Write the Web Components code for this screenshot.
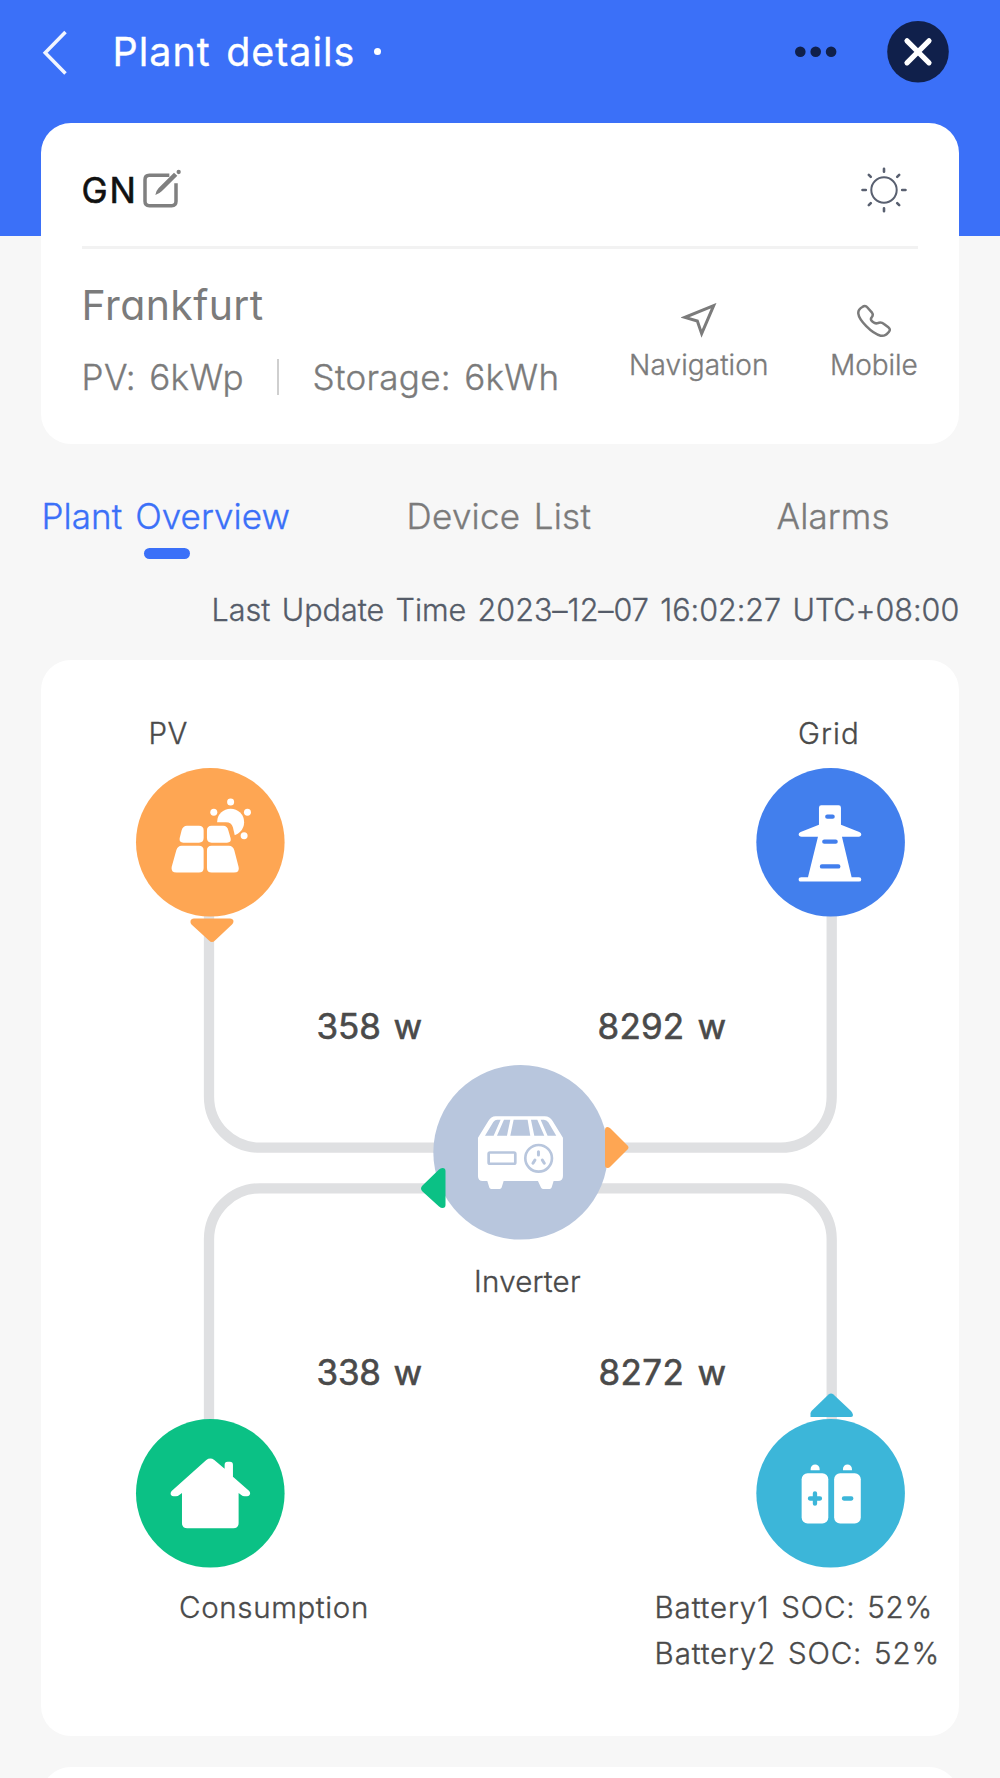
<!DOCTYPE html>
<html lang="en">
<head>
<meta charset="utf-8">
<title>Plant details</title>
<style>
html,body{margin:0;padding:0}
body{width:1000px;height:1778px;overflow:hidden;background:#f7f7f7;font-family:Inter,"Liberation Sans",sans-serif}
</style>
</head>
<body>
<plant-page></plant-page>
<script>
const pen = document.createElement('canvas').getContext('2d');
const define = (name, html, init) => {
  const t = document.createElement('template');
  t.innerHTML = html;
  customElements.define(name, class extends HTMLElement {
    connectedCallback() {
      if (this.shadowRoot) return;
      this.attachShadow({mode: 'open'}).append(t.content.cloneNode(true));
      if (init) init(this, this.shadowRoot);
    }
  });
};

/* One line of text: size = font size, fit = visible width, weight = font weight, edge = extra stroke. */
define('fit-text', `<style>:host{display:block;flex:none;line-height:1.2;white-space:pre}span{display:block}</style><span><slot></slot></span>`, (el, root) => {
  const size = +el.getAttribute('size'), fit = +el.getAttribute('fit'), weight = el.getAttribute('weight') || 400;
  const edge = el.getAttribute('edge') || (weight == 300 ? 0.35 : 0);
  const text = el.textContent, s = root.querySelector('span');
  pen.font = `${weight} ${size}px Inter, "Liberation Sans", sans-serif`;
  const m = pen.measureText(text);
  const gap = size * 0.09, gaps = text.split(' ').length - 1;
  const ink = m.actualBoundingBoxLeft + m.actualBoundingBoxRight + gap * gaps;
  el.style.width = fit + 'px';
  s.style.cssText = `font-size:${size}px;font-weight:${weight};-webkit-text-stroke:${edge}px currentColor;word-spacing:${gap}px;letter-spacing:${((fit - 1.2 - ink) / (text.length - 1)).toFixed(3)}px;margin-left:${m.actualBoundingBoxLeft + 0.6}px`;
});

define('top-bar', `<style>
:host{display:flex;align-items:center;height:103px;padding:0 51px 0 42px;box-sizing:border-box;color:#fff}
.back{margin-top:3px;margin-right:47px}.dot{width:7px;height:7px;border-radius:50%;background:#fff;margin-left:21px}
.more{margin-left:auto;margin-right:50px}
svg{display:block;flex:none}
::slotted(*){margin-top:2px}
</style>
<svg class="back" width="26" height="46" viewBox="0 0 26 46"><path d="M23.5 2 3.2 22.7 23.5 43.5" fill="none" stroke="#fff" stroke-opacity=".93" stroke-width="3.5"/></svg>
<slot></slot><i class="dot"></i>
<svg class="more" width="42" height="12" viewBox="0 0 42 12" fill="#10204b"><circle cx="5.3" cy="5.8" r="5.3"/><circle cx="20.7" cy="5.8" r="5.3"/><circle cx="36.1" cy="5.8" r="5.3"/></svg>
<svg width="62" height="62" viewBox="0 0 62 62"><circle cx="31" cy="30.8" r="30.8" fill="#10204b"/><path d="M20 19.800 42 41.800M42 19.800 20 41.800" stroke="#fff" stroke-width="5.2" stroke-linecap="round"/></svg>`);

define('white-card', `<style>:host{display:block;margin:0 41px;border-radius:30px;background:#fff;position:relative;box-sizing:border-box}</style><slot></slot>`);

define('icon-action', `<style>:host{display:flex;flex-direction:column;align-items:center;gap:10px;color:#7b7b7b}</style><slot name="icon"></slot><slot></slot>`);

define('plant-summary', `<style>
:host{display:block;padding:0 41px;color:#7b7b7b}
.name{display:flex;align-items:center;height:123px;padding:11px 11px 0 1px;box-sizing:border-box;color:#111}
.name svg:first-of-type{margin-left:9px}.sun{margin-left:auto}
hr{border:0;margin:0;height:3px;background:#f2f2f2}
.info{display:flex;justify-content:space-between}
.left{padding:32px 0 0 2px}
.place{font-feature-settings:"cv11"}
.cap{display:flex;align-items:center;margin-top:26px;height:42px}
.bar{width:2px;height:36px;background:#cfcfcf;margin:0 35px 0 34px}
.acts{display:flex;gap:64px;padding-top:54px;margin-right:1px}
svg{display:block;flex:none}
</style>
<div class="name"><fit-text size="35" fit="51" edge="0.6">GN</fit-text>
<svg width="42" height="42" viewBox="431 505 126 126"><path d="M510 524H450q-13 0-13 13v65q0 13 13 13h67q13 0 13-13V548" fill="none" stroke="#808080" stroke-width="10.5"/><path d="M468 583q2-13 10-21l46-46 10 9-46 46q-8 8-20 12Z" fill="#808080"/><circle cx="538" cy="514" r="6.5" fill="#808080"/></svg>
<svg class="sun" width="46" height="46" viewBox="-23 -23 46 46" fill="none" stroke="#596070" stroke-linecap="round"><circle r="12.7" stroke-width="2"/><path stroke-width="2.6" d="M0-21.2V-18.2M0 21.2V18.2M-21.5 0H-18.2M21.5 0H18.2M-15.2-15.2-13.2-13.2M15.2-15.2 13.2-13.2M-15.2 15.2-13.2 13.2M15.2 15.2 13.2 13.2"/></svg></div>
<hr>
<div class="info"><div class="left"><fit-text class="place" size="41" fit="178">Frankfurt</fit-text>
<div class="cap"><fit-text size="35" fit="159" weight="300">PV: 6kWp</fit-text><i class="bar"></i><fit-text size="35" fit="243" weight="300">Storage: 6kWh</fit-text></div></div>
<div class="acts">
<icon-action><svg slot="icon" width="36" height="36" viewBox="244 188 108 108"><path d="M342 196 256 231 293 242 306 280Z" fill="none" stroke="#7b7b7b" stroke-width="9"/></svg><fit-text size="28" fit="137" weight="300">Navigation</fit-text></icon-action>
<icon-action><svg slot="icon" width="36" height="36" viewBox="768 188 108 108"><path d="M787 200c5-4 11-4 14 0l15 17c4 5 2 10-1 14-5 6-1 11 5 15 5 4 9 4 14 2 7-3 12-2 18 3l13 10c5 4 6 8 2 13-7 9-15 14-25 12-28-7-65-47-67-66-1-8 5-16 12-20Z" fill="none" stroke="#7b7b7b" stroke-width="7.5"/></svg><fit-text size="28" fit="85.500" weight="300">Mobile</fit-text></icon-action>
</div></div>`);

define('tab-bar', `<style>
:host{display:flex;justify-content:space-between;margin:51px 111px 0 44px;color:#7b7b7b}
.on{color:#3b70f8}.on i{display:block;width:46px;height:11px;border-radius:5.5px;background:#3b70f8;margin:11px auto 0}
</style><div class="on"><fit-text size="35" fit="246" weight="300">Plant Overview</fit-text><i></i></div>
<fit-text size="35" fit="182" weight="300" style="margin-right:66px">Device List</fit-text><fit-text size="35" fit="113" weight="300">Alarms</fit-text>`);

/* A node, arrow or label pinned on the diagram canvas at its x / y attributes. */
define('flow-pin', `<style>:host{position:absolute;display:block}</style><slot></slot>`, el => {
  el.style.left = el.getAttribute('x') + 'px';
  el.style.top = el.getAttribute('y') + 'px';
});

define('energy-flow', `<style>
:host{display:block;position:relative;height:1076px;color:#4a4a4a}
svg{display:block;overflow:visible}
</style>
<svg width="918" height="1076" viewBox="41 660 918 1076" fill="none" stroke="#dfe0e2" stroke-width="10.3">
<path d="M209 900V1096.7a51 51 0 0 0 51 51H460M831.7 900V1096.7a51 51 0 0 1-51 51H580M209 1430V1239.3a51 51 0 0 1 51-51H460M831.7 1430V1239.3a51 51 0 0 0-51-51H580"/></svg>

<flow-pin x="95" y="108"><svg width="148.6" height="148.6" viewBox="78 204 446 446"><circle cx="301" cy="427" r="223" fill="#fea653"/><g fill="#fff"><circle cx="362" cy="306" r="10.5"/><circle cx="311.500" cy="336.500" r="10.500"/><circle cx="412.500" cy="336.500" r="10.500"/><circle cx="402.500" cy="407" r="10.500"/><circle cx="362" cy="366.500" r="40.500"/></g><path d="M310 366.500H348q17 0 21 16l7 30-40 8-30-30Z" fill="#fea653"/><g fill="#fff"><path d="M231 377h36q14 0 14 14v23q0 14-14 14H220q-13 0-11-13l6-24q4-14 16-14ZM305 377h35q12 0 15 14l7 24q3 13-11 13H305q-14 0-14-14v-23q0-14 14-14ZM215 437h52q14 0 14 14v53q0 14-14 14H200q-18 0-15-17l14-50q4-14 16-14ZM305 437h52q12 0 16 14l13 50q4 17-14 17H305q-14 0-14-14v-53q0-14 14-14Z"/></g></svg></flow-pin>

<flow-pin x="715" y="108"><svg width="148.6" height="148.6" viewBox="528 204 446 446"><circle cx="752" cy="427" r="223" fill="#427fed"/><path fill="#fff" d="M724 316h52q7 0 7 7v51l55 22q6 3 6 7 0 7-8 7H786l29 122h22q7 0 7 6.500t-7 6.500H664q-8 0-8-6.500t8-6.500h20L714 410H665q-9 0-9-7 0-4 6-7l55-22V323q0-7 7-7Z"/><path d="M742 350H758M733 425H767M726 499.500H775" stroke="#427fed" stroke-width="13" stroke-linecap="round"/></svg></flow-pin>

<flow-pin x="95" y="759.4"><svg width="148.6" height="148.6" viewBox="78 208 446 446"><circle cx="301" cy="431" r="223" fill="#0bc185"/><path fill="#fff" d="M289 331q12-9 24 0l31 26V345q0-9 9-9h7q9 0 9 9v36l48 42q6 7 2 13-3 4-8 4H404q-6 0-10-4l-8-6v90q0 16-16 16H232q-16 0-16-16V430l-8 6q-4 4-10 4h-7q-5 0-8-4-3-6 2-12Z"/></svg></flow-pin>

<flow-pin x="715" y="759.4"><svg width="148.600" height="148.600" viewBox="378 208 446 446"><circle cx="602" cy="431" r="223" fill="#3cb6d9"/><g fill="#fff"><rect x="515" y="371" width="80" height="151" rx="18"/><rect x="612.500" y="371" width="80" height="151" rx="18"/><path d="M542 362v-4a13 13 0 0 1 27 0v4ZM639 362v-4a13 13 0 0 1 27 0v4Z"/></g><path d="M540 446.500H570M555 431V462M642 446.500H664" stroke="#3cb6d9" stroke-width="13" stroke-linecap="round"/></svg></flow-pin>

<flow-pin x="392" y="405.400"><svg width="174.600" height="174.600" viewBox="99 76 524 524"><circle cx="362" cy="338" r="262" fill="#b8c6dd"/><path fill="#fff" d="M287 230H434q16 0 24 14l31 50V409q0 15-15 15H461l-6 20q-1 4-6 4H429q-4 0-6-4l-9-20H311l-6 20q-1 4-6 4H274q-5 0-6-4l-6-20H248q-14 0-14-15V294l31-50q8-14 22-14Z"/><g fill="#b8c6dd"><path d="M292 240H302L281 288H255L280 247q5-7 12-7ZM312 240H331L321 288H291ZM341 240H383L391 288H331ZM393 240H412L433 288H403ZM422 240H432q8 0 13 8L469 288H443Z"/></g><g fill="none" stroke="#b8c6dd" stroke-width="8"><rect x="266" y="338.500" width="80" height="34" rx="4"/><circle cx="416" cy="356" r="40"/><path d="M415.500 336V346M405 361 399 371M427 361 433 371" stroke-width="9" stroke-linecap="round"/></g></svg></flow-pin>

<flow-pin x="149" y="257.500"><svg width="44" height="25" viewBox="0 0 44 25"><path fill="#fea653" d="M4 .5H40q3 0 3.500 2.500 0 2-1.500 3.500L25 22.500q-3 3-6 0L1.500 6.500Q.2 5 .5 3 1 .5 4 .5Z"/></svg></flow-pin>
<flow-pin x="564" y="467"><svg width="24" height="42" viewBox="0 0 24 42"><path fill="#fea653" d="M0 3Q0 0 2.500 0 4 0 5.500 1.500L22.500 18.500q2 2 0 4L5.500 39.500Q4 41 2.500 41 0 41 0 38Z"/></svg></flow-pin>
<flow-pin x="379.500" y="508"><svg width="25" height="41" viewBox="0 0 25 41"><path fill="#0bc185" d="M24.500 3q0-3-3-3-2 0-3.500 1.500L1.500 17.500q-3 3 0 6L18 38.500q2 1.500 3.500 1.500 3 0 3-3Z"/></svg></flow-pin>
<flow-pin x="769" y="733"><svg width="44" height="25" viewBox="0 0 44 25"><path fill="#3cb6d9" d="M.5 24V20.500q0-1.500 1.500-3L18.500 1.500q2.500-2 5 0L41 18q1.500 1.500 2 4 0 2-2 2Z"/></svg></flow-pin>

<flow-pin x="109" y="55.500"><fit-text size="29.500" fit="38" weight="300">PV</fit-text></flow-pin>
<flow-pin x="757.500" y="55.500"><fit-text size="29.500" fit="59" weight="300">Grid</fit-text></flow-pin>
<flow-pin x="277" y="345"><fit-text size="35" fit="104" edge="0.6">358 w</fit-text></flow-pin>
<flow-pin x="558" y="345"><fit-text size="35" fit="127" edge="0.6">8292 w</fit-text></flow-pin>
<flow-pin x="434.500" y="604"><fit-text size="29.500" fit="105" weight="300">Inverter</fit-text></flow-pin>
<flow-pin x="277" y="691"><fit-text size="35" fit="104" edge="0.6">338 w</fit-text></flow-pin>
<flow-pin x="559" y="691"><fit-text size="35" fit="126" edge="0.6">8272 w</fit-text></flow-pin>
<flow-pin x="138.500" y="929.500"><fit-text size="29.500" fit="187" weight="300">Consumption</fit-text></flow-pin>
<flow-pin x="615" y="929.500"><fit-text size="29.500" fit="274" weight="300">Battery1 SOC: 52%</fit-text><fit-text size="29.500" fit="281" weight="300" style="margin-top:11px">Battery2 SOC: 52%</fit-text></flow-pin>`);

define('plant-page', `<style>
:host{display:block;height:1778px;overflow:hidden}
header{background:#3b70f8;height:236px}
.first{margin-top:-113px;height:320.500px}
.time{display:flex;justify-content:flex-end;margin:33px 42px 32px 0;color:#555c69}
.next{margin-top:31px;height:60px}
</style>
<header><top-bar><fit-text size="39.500" fit="238" edge="0.3">Plant details</fit-text></top-bar></header>
<white-card class="first"><plant-summary></plant-summary></white-card>
<tab-bar></tab-bar>
<div class="time"><fit-text size="30.500" fit="745" weight="300">Last Update Time 2023–12–07 16:02:27 UTC+08:00</fit-text></div>
<white-card><energy-flow></energy-flow></white-card>
<white-card class="next"></white-card>`);
</script>
</body>
</html>
